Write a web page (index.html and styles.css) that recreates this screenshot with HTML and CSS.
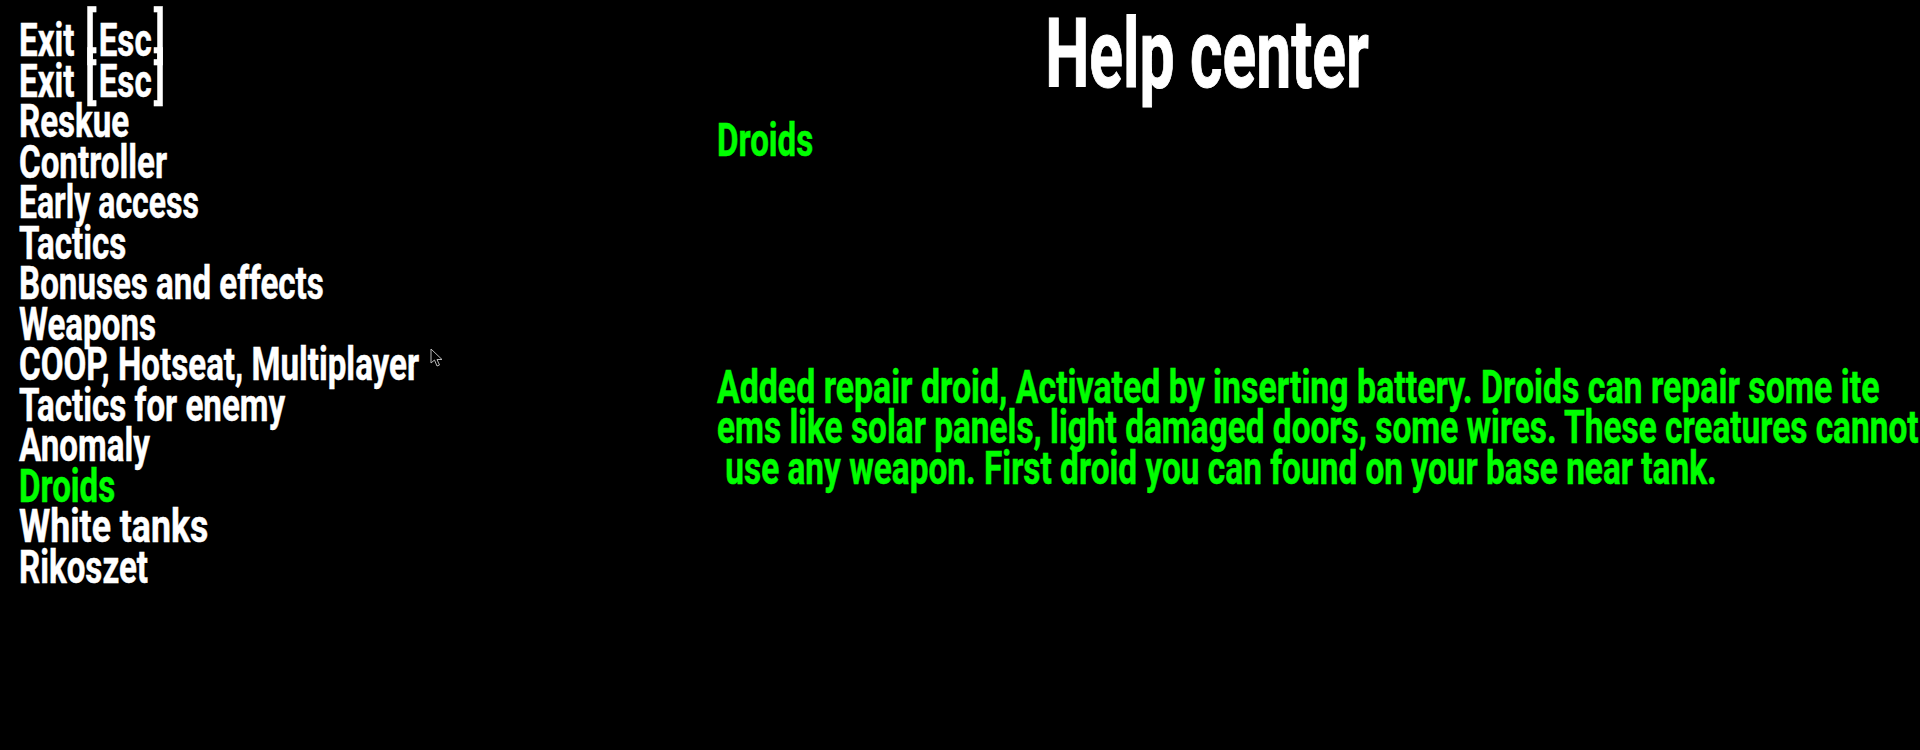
FILE: index.html
```html
<!DOCTYPE html>
<html>
<head lang="en">
    <meta charset="UTF-8">
    <title>Help center</title>
    <link rel="stylesheet" href="styles.css">
</head>
<body>
<div class="help-box">
    <ul class="menu">
        <li>Exit <span class="bracket">[</span>Esc<span class="bracket">]</span></li>
        <li>Exit <span class="bracket">[</span>Esc<span class="bracket">]</span></li>
        <li>Reskue</li>
        <li>Controller</li>
        <li class="narrow">Early access</li>
        <li>Tactics</li>
        <li>Bonuses and effects</li>
        <li>Weapons</li>
        <li>COOP, Hotseat, Multiplayer</li>
        <li>Tactics for enemy</li>
        <li>Anomaly</li>
        <li class="active">Droids</li>
        <li class="wide">White tanks</li>
        <li>Rikoszet</li>
    </ul>
    <div class="content">
        <h1 class="title">Help center</h1>
        <h2 class="topic">Droids</h2>
        <p class="text">
            <span class="line-first">Added repair droid, Activated by inserting battery. Droids can repair some ite</span>
            <span>ems like solar panels, light damaged doors, some wires. These creatures cannot</span>
            <span> use any weapon. First droid you can found on your base near tank.</span>
        </p>
    </div>
</div>
<!-- mouse pointer -->
<svg class="cursor" width="14" height="20" viewBox="0 0 14 20">
    <path d="M1 1 L1 15 L4.5 12 L7 18 L9.5 17 L7 11.5 L12 11.5 Z" fill="#000" stroke="#bbb" stroke-width="1"/>
</svg>
</body>
</html>
```
FILE: styles.css
```css
html, body{
    margin: 0;
    height: 100%;
    background: #000;
    overflow: hidden;
}
body{
    font-family: "Roboto", "Liberation Sans", sans-serif;
    font-weight: 700;
    font-size: 46px;
    line-height: 40.5px;
    color: #fff;
    -webkit-text-stroke: 0.5px currentColor;
}
.help-box{
    display: flex;
}
.menu{
    list-style: none;
    margin: 0;
    padding: 20px 0 0 19px;
    width: 698px;
    flex: none;
}
.menu li{
    white-space: nowrap;
    transform: scaleX(0.72);
    transform-origin: left;
}
.menu .narrow{
    transform: scaleX(0.695);
}
.menu .wide{
    transform: scaleX(0.775);
}
.menu .active{
    color: #00ff00;
}
.bracket{
    font-size: 60px;
    line-height: 0;
    font-weight: 500;
    margin: 0 3px;
}
.content{
    flex: 1;
    min-width: 0;
}
.title{
    margin: 0;
    width: 980px;
    font-size: 96px;
    line-height: 108px;
    font-weight: 700;
    text-align: center;
    transform: scaleX(0.65);
    -webkit-text-stroke: 1px currentColor;
}
.topic{
    margin: 12px 0 0;
    font-size: 46px;
    line-height: 40.5px;
    font-weight: 700;
    color: #00ff00;
    transform: scaleX(0.72);
    transform-origin: left;
}
.text{
    margin: 206px 0 0;
    color: #00ff00;
}
.text span{
    display: block;
    white-space: pre;
    transform: scaleX(0.726);
    transform-origin: left;
}
.text .line-first{
    transform: scaleX(0.736);
}
.cursor{
    position: absolute;
    left: 430px;
    top: 348px;
}
```
